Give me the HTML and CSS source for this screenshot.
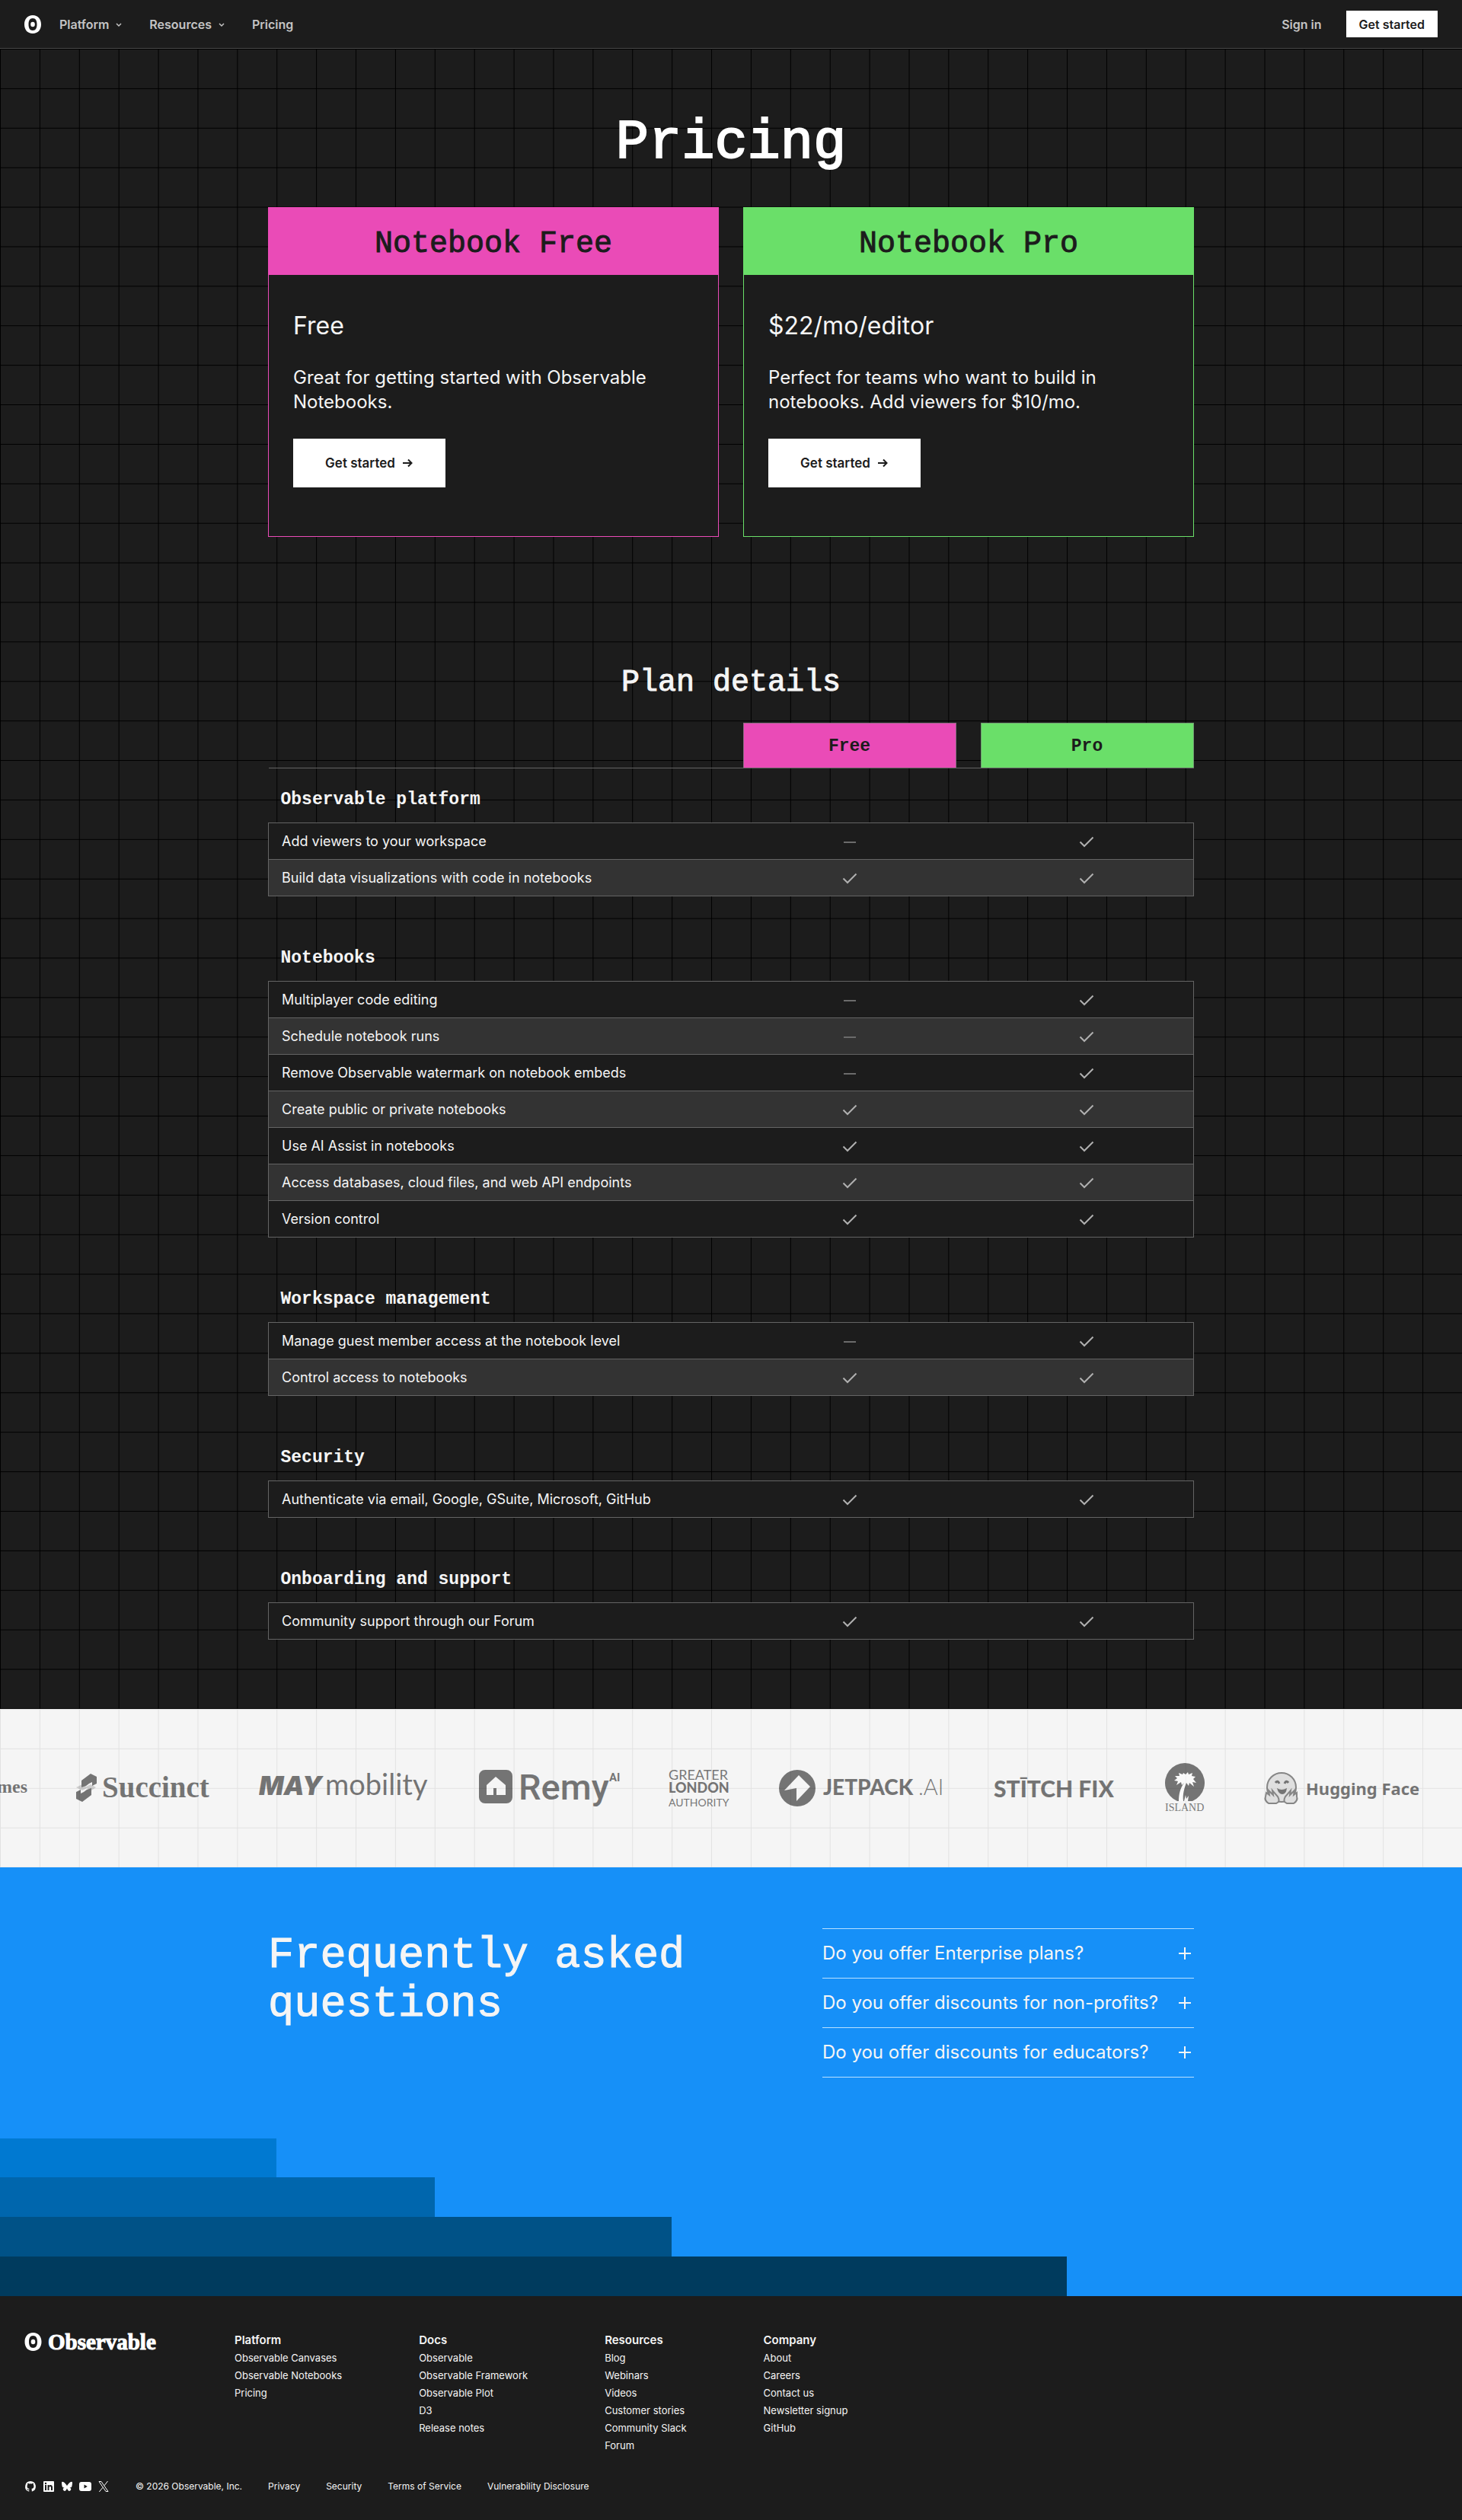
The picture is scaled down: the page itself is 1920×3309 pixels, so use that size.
FILE: index.html
```html
<!DOCTYPE html>
<html lang="en">
<head>
  <meta charset="UTF-8">
  <meta name="viewport" content="width=device-width, initial-scale=1.0">
  <title>Pricing | Observable</title>
  <link rel="stylesheet" href="styles.css">
</head>
<body>
  <svg class="sprite" aria-hidden="true">
    <symbol id="logo" viewBox="0 0 22 24">
      <path fill-rule="evenodd" d="M11 0c7 0 11 5 11 12s-4 12-11 12S0 19 0 12 4 0 11 0zm0 4C7 4 5.500 7.500 5.500 12S7 20 11 20s5.500-3.500 5.500-8S15 4 11 4z"/>
      <ellipse cx="11" cy="12" rx="2.800" ry="3.200"/>
    </symbol>
    <symbol id="chevron" viewBox="0 0 16 16">
      <path d="M5 7l3 3 3-3" fill="none" stroke="currentColor" stroke-width="1.500"/>
    </symbol>
    <symbol id="arrow" viewBox="0 0 16 16">
      <path d="M2 8h11M9 3.500L13.500 8 9 12.500" fill="none" stroke="currentColor" stroke-width="2"/>
    </symbol>
    <symbol id="check" viewBox="0 0 24 24">
      <path d="M3.500 12.500l5.500 5.500L20.500 6.500" fill="none" stroke="#b0b0b0" stroke-width="2"/>
    </symbol>
    <symbol id="dash" viewBox="0 0 24 24">
      <path d="M4 13h16" fill="none" stroke="#6b6b6b" stroke-width="2"/>
    </symbol>
    <symbol id="plus" viewBox="0 0 24 24">
      <path d="M12 4v16M4 12h16" fill="none" stroke="currentColor" stroke-width="2"/>
    </symbol>
  </svg>

  <header class="site-header">
    <a class="home" href="#" aria-label="Observable"><svg width="22" height="24"><use href="#logo"/></svg></a>
    <nav class="nav">
      <button class="nav-item">Platform <svg width="16" height="16"><use href="#chevron"/></svg></button>
      <button class="nav-item">Resources <svg width="16" height="16"><use href="#chevron"/></svg></button>
      <a class="nav-item" href="#">Pricing</a>
    </nav>
    <a class="nav-item sign-in" href="#">Sign in</a>
    <a class="button button-small" href="#">Get started</a>
  </header>

  <main class="pricing">
    <div class="container">
      <h1>Pricing</h1>

      <div class="cards">
        <section class="card card-free">
          <h2>Notebook Free</h2>
          <div class="card-body">
            <p class="price">Free</p>
            <p class="blurb">Great for getting started with Observable Notebooks.</p>
            <a class="button" href="#">Get started <svg width="16" height="16"><use href="#arrow"/></svg></a>
          </div>
        </section>
        <section class="card card-pro">
          <h2>Notebook Pro</h2>
          <div class="card-body">
            <p class="price">$22/mo/editor</p>
            <p class="blurb">Perfect for teams who want to build in notebooks. Add viewers for $10/mo.</p>
            <a class="button" href="#">Get started <svg width="16" height="16"><use href="#arrow"/></svg></a>
          </div>
        </section>
      </div>

      <h2 class="details-title">Plan details</h2>
      <table class="plans">
        <colgroup>
          <col>
          <col class="col-free">
          <col class="col-pro">
        </colgroup>
        <thead>
          <tr>
            <td></td>
            <th class="plan-free" scope="col"><span>Free</span></th>
            <th class="plan-pro" scope="col"><span>Pro</span></th>
          </tr>
        </thead>
        <tbody>
          <tr class="group"><th colspan="3" scope="rowgroup">Observable platform</th></tr>
          <tr><th scope="row">Add viewers to your workspace</th><td><svg role="img" aria-label="No"><use href="#dash"/></svg></td><td><svg role="img" aria-label="Yes"><use href="#check"/></svg></td></tr>
          <tr><th scope="row">Build data visualizations with code in notebooks</th><td><svg role="img" aria-label="Yes"><use href="#check"/></svg></td><td><svg role="img" aria-label="Yes"><use href="#check"/></svg></td></tr>
        </tbody>
        <tbody>
          <tr class="group"><th colspan="3" scope="rowgroup">Notebooks</th></tr>
          <tr><th scope="row">Multiplayer code editing</th><td><svg role="img" aria-label="No"><use href="#dash"/></svg></td><td><svg role="img" aria-label="Yes"><use href="#check"/></svg></td></tr>
          <tr><th scope="row">Schedule notebook runs</th><td><svg role="img" aria-label="No"><use href="#dash"/></svg></td><td><svg role="img" aria-label="Yes"><use href="#check"/></svg></td></tr>
          <tr><th scope="row">Remove Observable watermark on notebook embeds</th><td><svg role="img" aria-label="No"><use href="#dash"/></svg></td><td><svg role="img" aria-label="Yes"><use href="#check"/></svg></td></tr>
          <tr><th scope="row">Create public or private notebooks</th><td><svg role="img" aria-label="Yes"><use href="#check"/></svg></td><td><svg role="img" aria-label="Yes"><use href="#check"/></svg></td></tr>
          <tr><th scope="row">Use AI Assist in notebooks</th><td><svg role="img" aria-label="Yes"><use href="#check"/></svg></td><td><svg role="img" aria-label="Yes"><use href="#check"/></svg></td></tr>
          <tr><th scope="row">Access databases, cloud files, and web API endpoints</th><td><svg role="img" aria-label="Yes"><use href="#check"/></svg></td><td><svg role="img" aria-label="Yes"><use href="#check"/></svg></td></tr>
          <tr><th scope="row">Version control</th><td><svg role="img" aria-label="Yes"><use href="#check"/></svg></td><td><svg role="img" aria-label="Yes"><use href="#check"/></svg></td></tr>
        </tbody>
        <tbody>
          <tr class="group"><th colspan="3" scope="rowgroup">Workspace management</th></tr>
          <tr><th scope="row">Manage guest member access at the notebook level</th><td><svg role="img" aria-label="No"><use href="#dash"/></svg></td><td><svg role="img" aria-label="Yes"><use href="#check"/></svg></td></tr>
          <tr><th scope="row">Control access to notebooks</th><td><svg role="img" aria-label="Yes"><use href="#check"/></svg></td><td><svg role="img" aria-label="Yes"><use href="#check"/></svg></td></tr>
        </tbody>
        <tbody>
          <tr class="group"><th colspan="3" scope="rowgroup">Security</th></tr>
          <tr><th scope="row">Authenticate via email, Google, GSuite, Microsoft, GitHub</th><td><svg role="img" aria-label="Yes"><use href="#check"/></svg></td><td><svg role="img" aria-label="Yes"><use href="#check"/></svg></td></tr>
        </tbody>
        <tbody>
          <tr class="group"><th colspan="3" scope="rowgroup">Onboarding and support</th></tr>
          <tr><th scope="row">Community support through our Forum</th><td><svg role="img" aria-label="Yes"><use href="#check"/></svg></td><td><svg role="img" aria-label="Yes"><use href="#check"/></svg></td></tr>
        </tbody>
      </table>
    </div>
  </main>

  <section class="customers" aria-label="Customers">
    <svg class="brand" width="36" height="64">
      <text class="serif-bold" x="36" y="38" font-size="24" text-anchor="end">Times</text>
    </svg>
    <svg class="brand" width="176" height="64">
      <path d="M19 13l8 4v9l-6 3 0-5-4 2-4 3-6 2v-9z"/>
      <path d="M8 50l-8-4v-9l6-3 0 5 4-2 4-3 6-2v9z"/>
      <path d="M0 31l8-4 5 3 6-3 7 4-6 4-6-3-6 3z" opacity=".3"/>
      <text class="serif-bold" x="34" y="44" font-size="39">Succinct</text>
    </svg>
    <svg class="brand" width="225" height="64">
      <text class="inter-heavy" x="0" y="41" font-size="34" font-style="italic">MAY</text>
      <text class="lato" x="87" y="41" font-size="38">mobility</text>
    </svg>
    <svg class="brand" width="185" height="64">
      <path fill-rule="evenodd" d="M8 8h28a8 8 0 0 1 8 8v28a8 8 0 0 1-8 8H8a8 8 0 0 1-8-8V16a8 8 0 0 1 8-8zm14 9L10 28v13h9v-9h4v9h12V28z"/>
      <text class="roboto" x="52" y="47" font-size="47">Remy</text>
      <text class="roboto-bold" x="171" y="23" font-size="15">AI</text>
    </svg>
    <svg class="brand" width="81" height="64">
      <text class="lato" x="0" y="21" font-size="18">GREATER</text>
      <text class="lato-black" x="0" y="38" font-size="18">LONDON</text>
      <text class="lato" x="0" y="56" font-size="14">AUTHORITY</text>
    </svg>
    <svg class="brand" width="218" height="64">
      <path fill-rule="evenodd" d="M24 8a24 24 0 1 1 0 48 24 24 0 0 1 0-48zm2 7L7 35l16-3 0 17 18-19z"/>
      <text class="lato-black" x="58" y="41" font-size="28">JETPACK</text>
      <text class="lato-light" x="183" y="41" font-size="29">.AI</text>
    </svg>
    <svg class="brand" width="161" height="64">
      <text class="lato-black" x="0" y="44" font-size="30">STĪTCH FIX</text>
    </svg>
    <svg class="brand brand-island" width="54" height="64">
      <path d="M16 49A26 26 0 1 1 36 49z"/>
      <path fill="#fff" d="M24 12l3 2 3-3 1 3 5-2-1 4 5 1-3 3 4 5-5-1 2 6-6-5-1 4-3-4c-3 8-5 15-4 24h-6c0-9 2-17 7-24l-3 3-1-4-6 4 2-5-5-1 4-3-3-3h6l-1-4 5 2zM25 49l2-8 1 5 3-4-1 7z"/>
      <text class="serif" x="0" y="62" font-size="14">ISLAND</text>
    </svg>
    <svg class="brand" width="206" height="64">
      <circle cx="23" cy="31" r="19" fill="#ccc" stroke="#222" stroke-width="2"/>
      <path d="M15 25q3-4 5 1M27 26q2-5 5-1" fill="none" stroke="#000" stroke-width="3"/>
      <path d="M17 32q6 4 13 0-1 8-6 8t-7-8z"/>
      <path d="M3 38l4 3-1-6 6 6-1-6 7 8q4 7-2 9H6q-6-4-4-9zM43 38l-4 3 1-6-6 6 1-6-7 8q-4 7 2 9h9q6-4 4-9z" fill="#ccc" stroke="#222" stroke-width="2"/>
      <text class="sans-bold" x="55" y="41" font-size="22">Hugging Face</text>
    </svg>
  </section>

  <section class="faq">
    <div class="container faq-inner">
      <h2>Frequently asked questions</h2>
      <div class="faq-list">
        <details><summary>Do you offer Enterprise plans? <svg width="24" height="24"><use href="#plus"/></svg></summary></details>
        <details><summary>Do you offer discounts for non-profits? <svg width="24" height="24"><use href="#plus"/></svg></summary></details>
        <details><summary>Do you offer discounts for educators? <svg width="24" height="24"><use href="#plus"/></svg></summary></details>
      </div>
    </div>
    <div class="steps">
      <div class="step step-1"></div>
      <div class="step step-2"></div>
      <div class="step step-3"></div>
      <div class="step step-4"></div>
    </div>
  </section>

  <footer class="site-footer">
    <div class="footer-columns">
      <a class="wordmark" href="#"><svg width="23" height="24"><use href="#logo"/></svg>Observable</a>
      <div>
        <h3>Platform</h3>
        <ul>
          <li><a href="#">Observable Canvases</a></li>
          <li><a href="#">Observable Notebooks</a></li>
          <li><a href="#">Pricing</a></li>
        </ul>
      </div>
      <div>
        <h3>Docs</h3>
        <ul>
          <li><a href="#">Observable</a></li>
          <li><a href="#">Observable Framework</a></li>
          <li><a href="#">Observable Plot</a></li>
          <li><a href="#">D3</a></li>
          <li><a href="#">Release notes</a></li>
        </ul>
      </div>
      <div>
        <h3>Resources</h3>
        <ul>
          <li><a href="#">Blog</a></li>
          <li><a href="#">Webinars</a></li>
          <li><a href="#">Videos</a></li>
          <li><a href="#">Customer stories</a></li>
          <li><a href="#">Community Slack</a></li>
          <li><a href="#">Forum</a></li>
        </ul>
      </div>
      <div>
        <h3>Company</h3>
        <ul>
          <li><a href="#">About</a></li>
          <li><a href="#">Careers</a></li>
          <li><a href="#">Contact us</a></li>
          <li><a href="#">Newsletter signup</a></li>
          <li><a href="#">GitHub</a></li>
        </ul>
      </div>
    </div>
    <div class="footer-bottom">
      <div class="social">
        <a href="#" aria-label="GitHub"><svg width="16" height="16" viewBox="0 0 16 16"><path d="M8 1a7 7 0 0 0-2.200 13.600c.350.070.480-.150.480-.340v-1.300c-1.950.420-2.360-.830-2.360-.830-.320-.810-.780-1.030-.780-1.030-.640-.430.050-.420.050-.420.700.050 1.070.720 1.070.720.630 1.070 1.640.760 2.040.580.060-.450.240-.760.440-.940-1.550-.180-3.190-.780-3.190-3.460 0-.760.270-1.390.720-1.880-.070-.180-.310-.890.070-1.850 0 0 .590-.190 1.930.720a6.700 6.700 0 0 1 3.500 0c1.340-.910 1.920-.720 1.920-.720.380.960.140 1.670.070 1.850.450.490.720 1.120.720 1.880 0 2.690-1.640 3.280-3.200 3.450.250.220.480.640.480 1.300v1.930c0 .190.120.410.480.340A7 7 0 0 0 8 1z"/></svg></a>
        <a href="#" aria-label="LinkedIn"><svg width="16" height="16" viewBox="0 0 16 16"><path fill-rule="evenodd" d="M2 1h12a1 1 0 0 1 1 1v12a1 1 0 0 1-1 1H2a1 1 0 0 1-1-1V2a1 1 0 0 1 1-1zm1 5v7h2V6zm1-3.200a1.200 1.200 0 1 0 0 2.400 1.200 1.200 0 0 0 0-2.400zM6.500 6v7h2V9.500c0-2 2.500-2 2.500 0V13h2V9c0-3.500-3.300-3.800-4.500-2V6z"/></svg></a>
        <a href="#" aria-label="Bluesky"><svg width="16" height="16" viewBox="0 0 16 16"><path d="M8 7.200C7.400 5.900 5.400 3.400 3.600 2.300 2 1.300 1 1.600 1 3.300c0 1 .4 4.200.8 4.900.6 1.200 2 1.600 3.400 1.400-2.300.4-3.300 1.700-1.900 3.300 2.400 2.600 3.900-.4 4.700-2.300.8 1.900 2.200 4.900 4.700 2.300 1.400-1.600.4-2.900-1.900-3.300 1.400.2 2.800-.2 3.400-1.400.4-.7.800-3.900.8-4.900 0-1.700-1-2-2.600-1C10.600 3.400 8.600 5.900 8 7.200z"/></svg></a>
        <a href="#" aria-label="YouTube"><svg width="16" height="16" viewBox="0 0 16 16"><path fill-rule="evenodd" d="M3 2h10a3 3 0 0 1 3 3v6a3 3 0 0 1-3 3H3a3 3 0 0 1-3-3V5a3 3 0 0 1 3-3zm3.500 3.500v5L10.800 8z"/></svg></a>
        <a href="#" aria-label="X"><svg width="16" height="16" viewBox="0 0 16 16"><path d="M2 1.500h3l9 13h-3zM13.500 1L9 6.700M7 9.300L2.300 15" fill="none" stroke="#fff"/></svg></a>
      </div>
      <span>© 2026 Observable, Inc.</span>
      <a href="#">Privacy</a>
      <a href="#">Security</a>
      <a href="#">Terms of Service</a>
      <a href="#">Vulnerability Disclosure</a>
    </div>
  </footer>
</body>
</html>
```
FILE: styles.css
```css
:root {
  --tile: calc(100vw / 37);
  --dark: #1c1c1c;
  --pink: #ea4bb7;
  --green: #6adf69;
  --line: #646464;
  --mono: "Liberation Mono", monospace;
}
* {
  box-sizing: border-box;
}
body {
  margin: 0;
  background: var(--dark);
  color: #f5f5f5;
  font-family: Inter, sans-serif;
  font-size: 16px;
}
h1, h2, h3, p, ul {
  margin: 0;
  padding: 0;
}
ul {
  list-style: none;
}
a {
  color: inherit;
  text-decoration: none;
}
.sprite {
  position: absolute;
  width: 0;
  height: 0;
}
.container {
  max-width: 1280px;
  margin: 0 auto;
  padding: 0 32px;
}

/* header */
.site-header {
  display: flex;
  align-items: center;
  height: 64px;
  padding: 0 32px;
  border-bottom: 1px solid #4a4a4a;
}
.home {
  display: flex;
  margin-right: 24px;
  fill: #fff;
}
.nav {
  display: flex;
  gap: 32px;
  flex: 1;
}
.nav-item {
  display: flex;
  align-items: center;
  gap: 5px;
  padding: 0;
  border: none;
  background: none;
  color: #c4c4c4;
  font: 600 16px/24px Inter, sans-serif;
}
.sign-in {
  margin-right: 32px;
}
.button {
  display: flex;
  align-items: center;
  justify-content: center;
  gap: 8px;
  width: 200px;
  height: 64px;
  background: #fff;
  color: var(--dark);
  font-size: 17px;
  font-weight: 600;
}
.button-small {
  width: auto;
  height: 35px;
  padding: 0 17px;
  font-size: 16px;
}

/* pricing */
.pricing {
  padding: 84px 0 91px;
  background-image:
    linear-gradient(#000 1px, transparent 1px),
    linear-gradient(90deg, #000 1px, transparent 1px);
  background-size: var(--tile) var(--tile);
}
h1, h2 {
  font-family: var(--mono);
  font-weight: 400;
  -webkit-text-stroke: 1px currentColor;
}
h1 {
  margin-bottom: 44px;
  color: #fff;
  font-size: 72px;
  line-height: 80px;
  text-align: center;
  -webkit-text-stroke-width: 2px;
}
.cards {
  display: grid;
  grid-template-columns: 1fr 1fr;
  gap: 32px;
}
.card {
  border: 1px solid var(--accent);
  background: var(--dark);
}
.card-free {
  --accent: var(--pink);
}
.card-pro {
  --accent: var(--green);
}
.card h2 {
  padding: 24px 16px 16px;
  background: var(--accent);
  color: var(--dark);
  font-size: 40px;
  line-height: 48px;
  text-align: center;
}
.card-body {
  padding: 47px 32px 64px;
}
.price {
  font-size: 32px;
  line-height: 40px;
}
.blurb {
  margin: 32px 0;
  font-size: 24px;
  line-height: 32px;
}

/* plan table */
.details-title {
  padding: 168px 0 28px;
  font-size: 40px;
  line-height: 48px;
  text-align: center;
}
.plans {
  width: 100%;
  border-collapse: collapse;
  table-layout: fixed;
}
.col-free {
  width: 312px;
}
.col-pro {
  width: 280px;
}
.plans th,
.plans td {
  padding: 0;
  text-align: center;
}
.plans thead tr {
  border-bottom: 1px solid var(--line);
}
.plans thead span {
  display: block;
  padding-top: 2px;
  border: 1px solid #8a6a80;
  border-bottom: none;
  color: var(--dark);
  font: 700 23px/56px var(--mono);
}
.plan-free span {
  background: var(--pink);
}
.plans .plan-pro span {
  border-color: #6f9a70;
  background: var(--green);
}
.plans .plan-free,
.plans tbody td:nth-child(2) {
  padding-right: 32px;
}
.plans tbody tr {
  height: 48px;
  border: 1px solid var(--line);
  background: var(--dark);
}
.plans tbody tr:nth-child(odd) {
  background: #333;
}
.plans tbody th {
  padding-left: 17px;
  font-size: 18px;
  font-weight: 400;
  line-height: 24px;
  text-align: left;
}
.plans tbody tr.group {
  height: 112px;
  border: none;
  background: none;
}
.plans tbody:first-of-type tr.group {
  height: 72px;
}
.plans .group th {
  padding: 0 16px 14px;
  font-family: var(--mono);
  font-size: 23px;
  font-weight: 700;
  line-height: 32px;
  vertical-align: bottom;
}
.plans svg {
  display: block;
  width: 24px;
  height: 24px;
  margin: 0 auto;
}

/* customer logos */
.customers {
  display: flex;
  align-items: center;
  gap: 64px;
  height: calc(var(--tile) * 4);
  overflow: hidden;
  background-color: #f5f5f5;
  background-image:
    linear-gradient(#e2e2e2 1px, transparent 1px),
    linear-gradient(90deg, #e2e2e2 1px, transparent 1px);
  background-size: var(--tile) var(--tile);
}
.brand {
  flex: none;
  overflow: visible;
  fill: #000;
  opacity: .52;
}
.brand-island {
  margin-right: 12px;
}
.serif {
  font-family: "Liberation Serif", serif;
}
.serif-bold {
  font-family: "Liberation Serif", serif;
  font-weight: 700;
}
.inter-heavy {
  font-family: Inter, sans-serif;
  font-weight: 900;
}
.roboto {
  font-family: Roboto, sans-serif;
  font-weight: 500;
}
.roboto-bold {
  font-family: Roboto, sans-serif;
  font-weight: 700;
}
.lato {
  font-family: Lato, sans-serif;
}
.lato-light {
  font-family: Lato, sans-serif;
  font-weight: 300;
}
.lato-black {
  font-family: Lato, sans-serif;
  font-weight: 900;
}
.sans-bold {
  font-family: "Noto Sans", sans-serif;
  font-weight: 700;
}

/* faq */
.faq {
  padding-top: 80px;
  background: #1690f8;
}
.faq-inner {
  display: grid;
  grid-template-columns: 1fr 488px;
  align-items: start;
  padding-bottom: 80px;
}
.faq h2 {
  max-width: 600px;
  padding-top: 4px;
  font-size: 57px;
  line-height: 64px;
}
.faq-list {
  border-top: 1px solid #b9e0ff;
}
.faq-list details {
  border-bottom: 1px solid #b9e0ff;
}
.faq-list summary {
  display: flex;
  align-items: center;
  justify-content: space-between;
  height: 64px;
  font-size: 24px;
}
.step {
  height: var(--tile);
}
.step-1 {
  width: calc(var(--tile) * 7);
  background: #0079d1;
}
.step-2 {
  width: calc(var(--tile) * 11);
  background: #0066ad;
}
.step-3 {
  width: calc(var(--tile) * 17);
  background: #005287;
}
.step-4 {
  width: calc(var(--tile) * 27);
  background: #003b5e;
}

/* footer */
.site-footer {
  padding: 48px 32px 28px;
}
.footer-columns {
  display: flex;
  align-items: flex-start;
  gap: 101px;
}
.wordmark {
  display: flex;
  align-items: center;
  gap: 8px;
  min-width: 175px;
  height: 24px;
  fill: #fff;
  color: #fff;
  font: 700 29px/24px "Liberation Serif", serif;
  -webkit-text-stroke: 1px #fff;
}
.site-footer h3 {
  margin-bottom: 2px;
  font-size: 15px;
  font-weight: 600;
  line-height: 20px;
}
.site-footer li {
  font-size: 13px;
  line-height: 23px;
}
.footer-bottom {
  display: flex;
  align-items: center;
  gap: 34px;
  margin-top: 30px;
  font-size: 12px;
  line-height: 24px;
}
.social {
  display: flex;
  gap: 8px;
  fill: #fff;
}
.social a {
  display: flex;
}
```
